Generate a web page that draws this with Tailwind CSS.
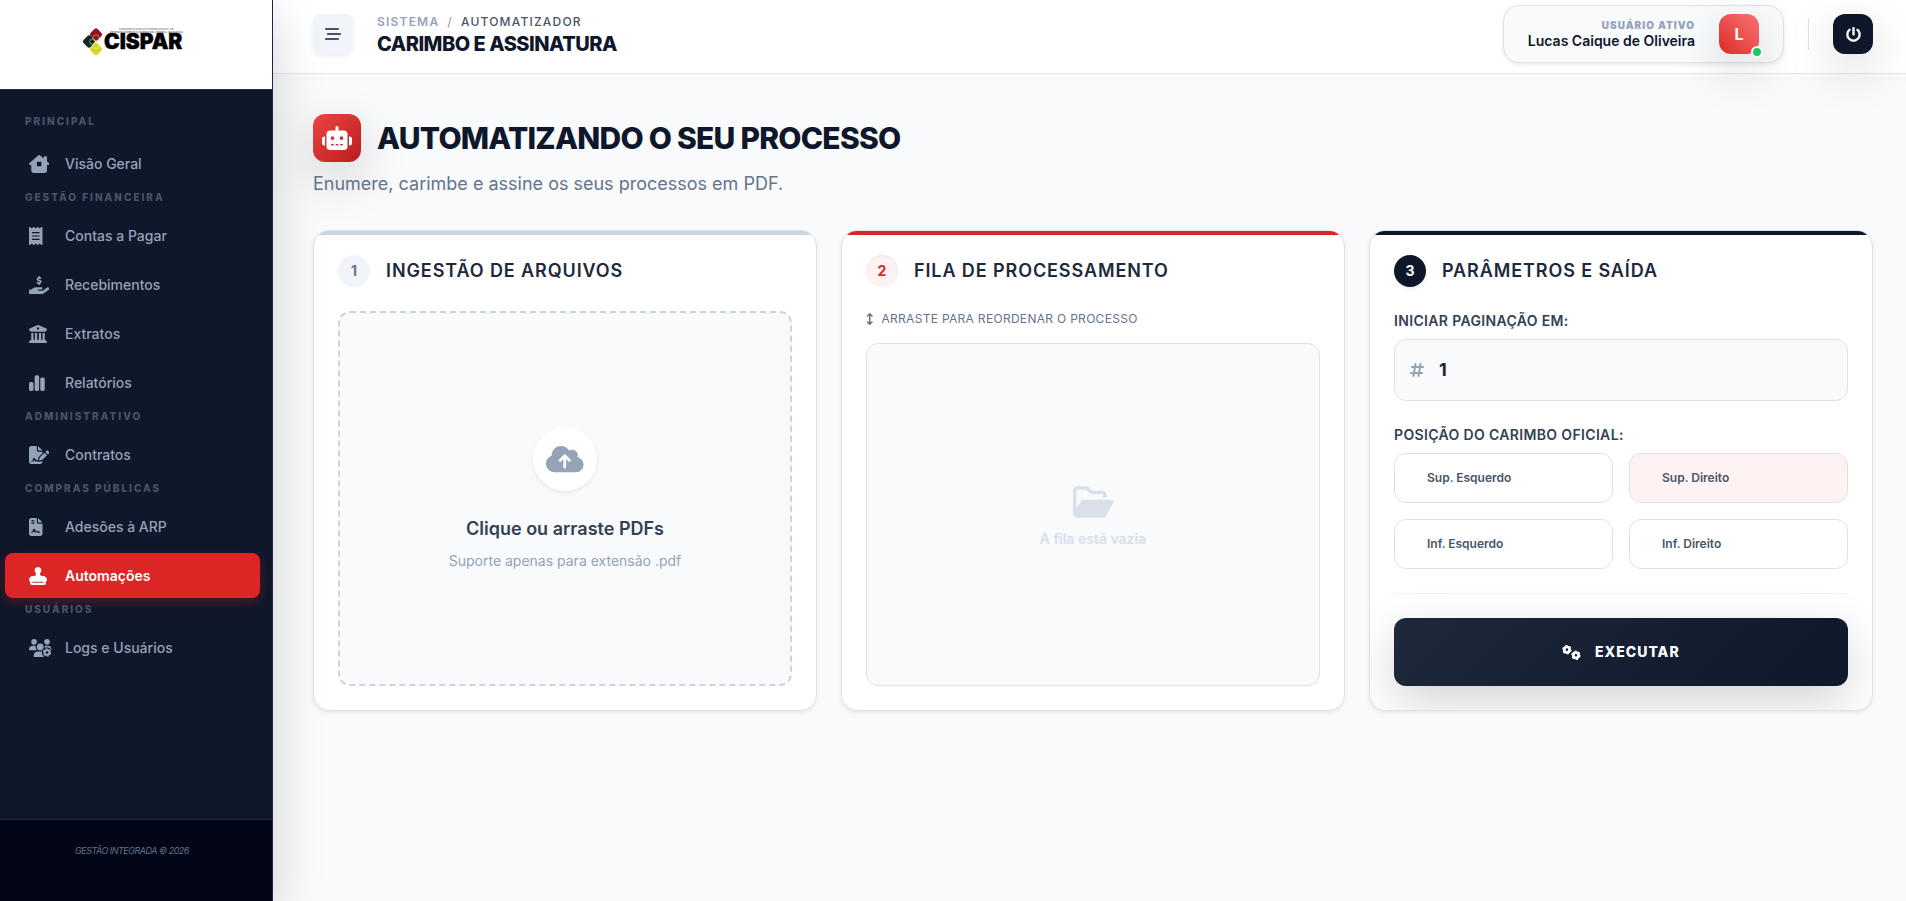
<!DOCTYPE html>
<html lang="pt-BR">
<head>
    <meta charset="UTF-8">
    <meta name="viewport" content="width=device-width, initial-scale=1.0">
    <title>Carimbo e Assinatura</title>
    <script src="https://cdn.jsdelivr.net/npm/@tailwindcss/browser@4"></script>
</head>
<body class="font-[Inter,sans-serif] bg-[#f8fafc] text-[#0f172a]">
    <div class="flex min-h-screen">

        <!-- Sidebar -->
        <aside class="relative z-20 flex w-[273px] shrink-0 flex-col border-r border-[#1e293b] bg-[#0f172a] shadow-[0_16px_48px_rgba(0,0,0,0.175)]">
            <div class="flex h-[90px] items-center justify-center border-b border-[#1e293b] bg-white pr-2">
                <svg class="h-9 w-[104px]" viewBox="0 0 104 36" role="img" aria-label="CISPAR">
                    <rect x="11" y="2.500" width="10" height="10" rx="2.500" transform="rotate(45 16 7.500)" fill="#8f1419"/>
                    <rect x="4" y="9.500" width="10" height="10" rx="2.500" transform="rotate(45 9 14.500)" fill="#0d2a1b"/>
                    <rect x="11" y="17" width="10" height="10" rx="2.500" transform="rotate(45 16 22)" fill="#d8d32a"/>
                    <circle cx="16" cy="11" r="3.200" fill="none" stroke="#d9a9a9" stroke-width=".6"/>
                    <circle cx="12.500" cy="14.700" r="2.800" fill="none" stroke="#cfd8d2" stroke-width=".6"/>
                    <circle cx="16" cy="18.500" r="3.200" fill="none" stroke="#f4f2b8" stroke-width=".6"/>
                    <text x="39" y="2.500" font-size="2.600" fill="#555">CONSÓRCIO PÚBLICO INTERMUNICIPAL DE</text>
                    <text x="30" y="5.500" font-size="2.600" fill="#333">DESENVOLVIMENTO SUSTENTÁVEL CENTRAL DO PARANÁ</text>
                    <text x="24" y="22" font-size="21" font-weight="900" fill="#000" stroke="#000" stroke-width=".4">CISPAR</text>
                </svg>
            </div>

            <nav class="flex flex-1 flex-col pt-[23px] pr-3 pl-[5px] text-sm font-medium text-[#94a3b8]">
                <h2 class="mb-1 pb-[6px] pl-5 text-[10px] leading-4 font-extrabold tracking-[2px] text-[#475569]">PRINCIPAL</h2>
                <a href="#" class="my-[2px] flex h-[45px] items-center rounded-lg pl-6">
                    <span class="w-9"><svg class="h-[18px]" viewBox="0 0 576 512" fill="currentColor" fill-rule="evenodd"><path d="M576 255.500c0 18-15 32.100-32 32.100h-32V448c0 35-29 64-64 64H128c-35 0-64-29-64-64V287.600H32c-18 0-32-14-32-32.100 0-9 3-17 10-24L266.400 8c7-7 15-8 22-8s15 2 21 7L416 100.700V64c0-17.700 14.300-32 32-32h32c17.700 0 32 14.300 32 32v121l52 45.500c8 7 12 15 12 25zM248 192c-13.300 0-24 10.700-24 24v80c0 13.300 10.700 24 24 24h80c13.300 0 24-10.700 24-24v-80c0-13.300-10.700-24-24-24z"/></svg></span>
                    Visão Geral
                </a>

                <h2 class="pt-[2px] pb-[6px] pl-5 text-[10px] leading-[15px] font-extrabold tracking-[2px] text-[#475569]">GESTÃO FINANCEIRA</h2>
                <a href="#" class="my-[2px] flex h-[45px] items-center rounded-lg pl-6">
                    <span class="w-9"><svg class="h-[18px]" viewBox="0 0 384 512" fill="currentColor" fill-rule="evenodd"><path d="M14 2.200C22.500-1.700 32.500-.3 39.600 5.800L80 40.400 120.400 5.800c9-7.700 22.300-7.700 31.200 0L192 40.400 232.400 5.800c9-7.700 22.300-7.700 31.200 0L304 40.400 344.400 5.800c7.100-6.100 17.100-7.500 25.600-3.600s14 12.400 14 21.800V488c0 9.400-5.500 17.900-14 21.800s-18.500 2.500-25.600-3.600L304 471.600l-40.400 34.600c-9 7.700-22.300 7.700-31.200 0L192 471.600l-40.400 34.600c-9 7.700-22.300 7.700-31.200 0L80 471.600 39.600 506.200c-7.100 6.100-17.100 7.500-25.600 3.600S0 497.400 0 488V24C0 14.600 5.500 6.100 14 2.200zM96 144c-8.800 0-16 7.200-16 16s7.200 16 16 16H288c8.800 0 16-7.200 16-16s-7.200-16-16-16H96zM80 352c0 8.800 7.200 16 16 16H288c8.800 0 16-7.200 16-16s-7.200-16-16-16H96c-8.800 0-16 7.200-16 16zM96 240c-8.800 0-16 7.200-16 16s7.200 16 16 16H288c8.800 0 16-7.200 16-16s-7.200-16-16-16H96z"/></svg></span>
                    Contas a Pagar
                </a>
                <a href="#" class="my-[2px] flex h-[45px] items-center rounded-lg pl-6">
                    <span class="w-9"><svg class="h-[18px]" viewBox="0 0 576 512" fill="currentColor"><path d="M312 24V34.500c6.400 1.200 12.600 2.700 18.200 4.200c12.800 3.400 20.400 16.600 17 29.400s-16.600 20.400-29.400 17c-10.900-2.900-21.100-4.900-30.200-5c-7.300-.1-14.700 1.700-19.400 4.400c-2.100 1.300-3.100 2.400-3.500 3c-.3 .5-.7 1.200-.7 2.800c0 .3 0 .5 0 .6c.2 .2 .9 1.200 3.300 2.600c5.800 3.500 14.400 6.200 27.400 10.100l.9 .3c11.100 3.300 25.900 7.800 37.900 15.300c13.700 8.600 26.100 22.900 26.400 44.900c.3 22.500-11.400 38.900-26.700 48.500c-6.700 4.100-13.900 7-21.300 8.800V232c0 13.300-10.700 24-24 24s-24-10.700-24-24V220.600c-9.500-2.300-18.200-5.300-25.600-7.800c-2.100-.7-4.100-1.400-6-2c-12.600-4.200-19.400-17.800-15.200-30.400s17.800-19.400 30.400-15.200c2.600 .9 5 1.700 7.300 2.500c13.600 4.600 23.400 7.900 33.900 8.300c8 .3 15.100-1.600 19.200-4.100c1.900-1.200 2.800-2.200 3.200-2.900c.4-.6 .9-1.800 .8-4.100l0-.2c0-1 0-2.100-4-4.600c-5.700-3.600-14.300-6.400-27.100-10.300l-1.900-.6c-10.800-3.200-25-7.500-36.400-14.400c-13.500-8.100-26.500-22-26.600-44.100c-.1-22.900 12.900-38.600 27.700-47.400c6.400-3.800 13.300-6.400 20.200-8.200V24c0-13.300 10.700-24 24-24s24 10.700 24 24zM568.200 336.300c13.100 17.800 9.300 42.800-8.500 55.900L433.100 485.500c-23.400 17.200-51.600 26.500-80.700 26.500H192 32c-17.700 0-32-14.300-32-32V416c0-17.700 14.300-32 32-32H68.800l44.900-36c22.700-18.200 50.900-28 80-28H272h16 64c17.700 0 32 14.300 32 32s-14.300 32-32 32H288 272c-8.800 0-16 7.200-16 16s7.200 16 16 16H392.600l119.700-88.200c17.800-13.100 42.800-9.300 55.900 8.500z"/></svg></span>
                    Recebimentos
                </a>
                <a href="#" class="my-[2px] flex h-[45px] items-center rounded-lg pl-6">
                    <span class="w-9"><svg class="h-[18px]" viewBox="0 0 512 512" fill="currentColor" fill-rule="evenodd"><path d="M243.400 2.600l-224 96c-14 6-21.800 21-18.700 35.800S16.800 160 32 160v8c0 13.300 10.700 24 24 24H456c13.300 0 24-10.700 24-24v-8c15.200 0 28.300-10.700 31.300-25.600s-4.800-29.900-18.700-35.800l-224-96c-8-3.400-17.200-3.400-25.200 0zM128 224H64V420.300c-.6 .3-1.200 .7-1.800 1.100l-48 32c-11.700 7.800-17 22.400-12.900 35.900S17.900 512 32 512H480c14.100 0 26.500-9.200 30.600-22.700s-1.100-28.100-12.900-35.900l-48-32c-.6-.4-1.200-.7-1.800-1.100V224H384V416H344V224H280V416H232V224H168V416H128V224zM256 64a32 32 0 1 1 0 64 32 32 0 1 1 0-64z"/></svg></span>
                    Extratos
                </a>
                <a href="#" class="my-[2px] flex h-[45px] items-center rounded-lg pl-6">
                    <span class="w-9"><svg class="h-[18px]" viewBox="0 0 448 512" fill="currentColor"><path d="M160 80c0-26.500 21.500-48 48-48h32c26.500 0 48 21.500 48 48V432c0 26.500-21.500 48-48 48H208c-26.500 0-48-21.500-48-48V80zM0 272c0-26.500 21.500-48 48-48H80c26.500 0 48 21.500 48 48V432c0 26.500-21.500 48-48 48H48c-26.500 0-48-21.500-48-48V272zM368 96h32c26.500 0 48 21.500 48 48V432c0 26.500-21.500 48-48 48H368c-26.500 0-48-21.500-48-48V144c0-26.500 21.500-48 48-48z"/></svg></span>
                    Relatórios
                </a>

                <h2 class="pt-[2px] pb-[6px] pl-5 text-[10px] leading-[15px] font-extrabold tracking-[2px] text-[#475569]">ADMINISTRATIVO</h2>
                <a href="#" class="my-[2px] flex h-[45px] items-center rounded-lg pl-6">
                    <span class="w-9"><svg class="h-[18px]" viewBox="0 0 576 512" fill="currentColor"><path d="M64 0C28.700 0 0 28.700 0 64V448c0 35.300 28.700 64 64 64H320c35.300 0 64-28.700 64-64V428.700c-2.700 1.100-5.400 2-8.200 2.700l-60.100 15c-3 .7-6 1.200-9 1.400c-.9 .1-1.800 .2-2.700 .2H240c-6.100 0-11.600-3.400-14.300-8.800l-8.800-17.700c-1.700-3.400-5.100-5.500-8.800-5.500s-7.200 2.100-8.800 5.500l-8.800 17.700c-2.900 5.900-9.200 9.400-15.700 8.800s-12.100-5.100-13.900-11.300L144 381l-9.800 32.800c-6.100 20.300-24.800 34.200-46 34.200H80c-8.800 0-16-7.200-16-16s7.200-16 16-16h8.200c7.100 0 13.300-4.600 15.300-11.400l14.900-49.500c3.400-11.300 13.800-19.100 25.600-19.100s22.200 7.700 25.600 19.100l11.600 38.600c7.400-6.200 16.800-9.700 26.800-9.700c15.900 0 30.400 9 37.500 23.200l4.400 8.800h8.900c-3.100-8.800-3.700-18.400-1.400-27.800l15-60.100c2.800-11.300 8.600-21.500 16.800-29.700L384 203.600V160H256c-17.700 0-32-14.300-32-32V0H64zM256 0V128H384L256 0zM549.800 139.700c-15.600-15.600-40.900-15.600-56.600 0l-29.400 29.400 71 71 29.400-29.400c15.600-15.600 15.600-40.900 0-56.600l-14.400-14.400zM311.900 321c-4.100 4.100-7 9.200-8.400 14.900l-15 60.100c-1.400 5.500 .2 11.200 4.200 15.200s9.700 5.600 15.200 4.200l60.100-15c5.600-1.400 10.800-4.300 14.900-8.400L512.100 262.700l-71-71L311.900 321z"/></svg></span>
                    Contratos
                </a>

                <h2 class="pt-[2px] pb-[6px] pl-5 text-[10px] leading-[15px] font-extrabold tracking-[2px] text-[#475569]">COMPRAS PÚBLICAS</h2>
                <a href="#" class="my-[2px] flex h-[45px] items-center rounded-lg pl-6">
                    <span class="w-9"><svg class="h-[18px]" viewBox="0 0 384 512" fill="currentColor" fill-rule="evenodd"><path d="M64 0C28.700 0 0 28.700 0 64V448c0 35.300 28.700 64 64 64H320c35.300 0 64-28.700 64-64V160H256c-17.700 0-32-14.300-32-32V0H64zM256 0V128H384L256 0zM80 64h64c8.800 0 16 7.200 16 16s-7.200 16-16 16H80c-8.800 0-16-7.200-16-16s7.200-16 16-16zm0 64h64c8.800 0 16 7.200 16 16s-7.200 16-16 16H80c-8.800 0-16-7.200-16-16s7.200-16 16-16zm54.200 253.800c-6.100 20.300-24.800 34.200-46 34.200H80c-8.800 0-16-7.200-16-16s7.200-16 16-16h8.200c7.100 0 13.300-4.600 15.300-11.400l14.900-49.500c3.400-11.300 13.800-19.100 25.600-19.100s22.200 7.700 25.600 19.100l11.600 38.600c7.400-6.200 16.800-9.700 26.800-9.700c15.900 0 30.400 9 37.500 23.200l4.400 8.800H304c8.800 0 16 7.200 16 16s-7.200 16-16 16H240c-6.100 0-11.600-3.400-14.300-8.800l-8.800-17.700c-1.700-3.400-5.100-5.500-8.800-5.500s-7.200 2.100-8.800 5.500l-8.800 17.700c-2.900 5.900-9.200 9.400-15.700 8.800s-12.100-5.100-13.900-11.300L144 349l-9.800 32.800z"/></svg></span>
                    Adesões à ARP
                </a>
                <a href="#" aria-current="page" class="my-[2px] flex h-[45px] items-center rounded-lg bg-[#dc2626] pl-6 font-semibold text-white shadow-[0_4px_12px_rgba(220,38,38,0.3)]">
                    <span class="w-9"><svg class="h-[18px]" viewBox="0 0 512 512" fill="currentColor" fill-rule="evenodd"><path d="M312 201.800c0-17.400 9.200-33.200 19.900-47C344.500 138.500 352 118.100 352 96c0-53-43-96-96-96s-96 43-96 96c0 22.100 7.500 42.500 20.100 58.800c10.700 13.800 19.900 29.600 19.900 47c0 29.900-24.300 54.200-54.200 54.200H112C50.100 256 0 306.100 0 368c0 20.900 13.400 38.700 32 45.300V464c0 26.500 21.500 48 48 48H432c26.500 0 48-21.500 48-48V413.300c18.600-6.600 32-24.400 32-45.300c0-61.900-50.100-112-112-112H366.200c-29.900 0-54.200-24.300-54.200-54.200zM416 416v32H96V416H416z"/></svg></span>
                    Automações
                </a>

                <h2 class="pt-[2px] pb-[6px] pl-5 text-[10px] leading-[15px] font-extrabold tracking-[2px] text-[#475569]">USUÁRIOS</h2>
                <a href="#" class="my-[2px] flex h-[45px] items-center rounded-lg pl-6">
                    <span class="w-9"><svg class="h-[18px]" viewBox="0 0 640 512" fill="currentColor"><path d="M144 160A80 80 0 1 0 144 0a80 80 0 1 0 0 160zm368 0A80 80 0 1 0 512 0a80 80 0 1 0 0 160zM0 298.700C0 310.400 9.600 320 21.300 320H234.700c-26.600-23.500-43.300-57.800-43.300-96c0-7.600 .7-15 1.900-22.300c-13.600-6.300-28.700-9.700-44.600-9.700H106.700C47.800 192 0 239.800 0 298.700zM405.300 320H618.700c11.700 0 21.300-9.600 21.300-21.300C640 239.800 592.200 192 533.300 192H490.700c-15.900 0-31 3.500-44.600 9.700c1.300 7.200 1.900 14.700 1.900 22.300c0 38.200-16.800 72.500-42.700 96zM320 320a96 96 0 1 0 0-192 96 96 0 1 0 0 192zM261.300 352C187.700 352 128 411.700 128 485.300c0 14.700 11.900 26.700 26.700 26.700H485.300c14.700 0 26.700-11.900 26.700-26.700C512 411.700 452.300 352 378.700 352z"/><circle cx="512" cy="384" r="146" fill="#0f172a"/><circle cx="512" cy="384" r="68" fill="none" stroke="currentColor" stroke-width="60"/><circle cx="512" cy="384" r="104" fill="none" stroke="currentColor" stroke-width="36" stroke-dasharray="54.450"/></svg></span>
                    Logs e Usuários
                </a>
            </nav>

            <footer class="flex h-[82px] flex-col items-center border-t border-[#1e293b] bg-[#020617] pt-6 pr-2 text-[9px] leading-[14px] tracking-[-0.5px] text-[#64748b] italic">GESTÃO INTEGRADA © 2026</footer>
        </aside>

        <div class="flex min-w-0 flex-1 flex-col">
            <!-- Top bar -->
            <header class="flex h-[74px] items-center justify-between border-b border-[#e2e8f0] bg-white pr-[33px] pb-[5px] pl-10">
                <div class="flex items-center gap-6">
                    <button type="button" aria-label="Menu" class="flex size-10 items-center justify-center rounded-lg bg-[#f1f5f9] text-[#475569] shadow-[0_2px_4px_rgba(0,0,0,0.075)]">
                        <svg class="h-4" viewBox="0 0 512 512" fill="currentColor"><path d="M0 96C0 78.300 14.300 64 32 64H416c17.700 0 32 14.300 32 32s-14.300 32-32 32H32C14.300 128 0 113.700 0 96zM64 256c0-17.700 14.300-32 32-32H480c17.700 0 32 14.300 32 32s-14.300 32-32 32H96c-17.700 0-32-14.300-32-32zM448 416c0 17.700-14.300 32-32 32H32c-17.700 0-32-14.300-32-32s14.300-32 32-32H416c17.700 0 32 14.300 32 32z"/></svg>
                    </button>
                    <div>
                        <div class="flex gap-2 text-xs leading-5 font-medium tracking-widest text-[#475569]">
                            <span class="font-semibold text-[#94a3b8]">SISTEMA</span>
                            <span class="text-[#94a3b8]">/</span>
                            <span>AUTOMATIZADOR</span>
                        </div>
                        <h1 class="text-xl leading-6 font-extrabold tracking-tight">CARIMBO E ASSINATURA</h1>
                    </div>
                </div>

                <div class="flex items-center gap-6">
                    <div class="flex h-[58px] items-center gap-6 rounded-2xl border border-[#dee2e6] bg-[#f8fafc] px-6 shadow-[0_2px_4px_rgba(0,0,0,0.075)]">
                        <div class="text-right">
                            <p class="text-[10px] leading-[14px] font-black tracking-[1px] text-[#94a3b8]">USUÁRIO ATIVO</p>
                            <p class="text-sm leading-[18px] font-semibold">Lucas Caique de Oliveira</p>
                        </div>
                        <div class="relative flex size-10 items-center justify-center rounded-xl bg-linear-45 from-[#dc2626] to-[#f87171] font-bold text-white shadow-[0_16px_48px_rgba(0,0,0,0.175)]">
                            L
                            <span class="absolute -right-1 -bottom-1 size-3 rounded-full border-2 border-white bg-[#22c55e]"></span>
                        </div>
                    </div>
                    <div class="h-8 w-px bg-[#dee2e6]"></div>
                    <button type="button" aria-label="Sair" class="flex size-10 items-center justify-center rounded-xl bg-[#0f172a] text-white shadow-[0_16px_48px_rgba(0,0,0,0.175)]">
                        <svg class="h-[15px]" viewBox="0 0 512 512" fill="currentColor" stroke="currentColor" stroke-width="16"><path d="M288 32c0-17.700-14.300-32-32-32s-32 14.300-32 32V256c0 17.700 14.300 32 32 32s32-14.300 32-32V32zM143.500 120.600c13.600-11.300 15.400-31.500 4.100-45.100s-31.500-15.400-45.100-4.100C49.700 115.400 16 181.800 16 256c0 132.500 107.500 240 240 240s240-107.500 240-240c0-74.200-33.800-140.600-86.600-184.600c-13.600-11.300-33.800-9.400-45.100 4.100s-9.400 33.800 4.100 45.100c38.900 32.300 63.500 81 63.500 135.400c0 97.200-78.800 176-176 176s-176-78.800-176-176c0-54.400 24.700-103.100 63.500-135.400z"/></svg>
                    </button>
                </div>
            </header>

            <main class="flex-1 pt-10 pr-[33px] pb-10 pl-10">
                <!-- Page title -->
                <div class="mb-2 flex items-center gap-4">
                    <div class="flex size-12 items-center justify-center rounded-xl bg-linear-135 from-[#ef4444] to-[#b91c1c] text-white shadow-[0_16px_48px_rgba(0,0,0,0.175)]">
                        <svg class="h-6" viewBox="0 0 640 512" fill="currentColor" fill-rule="evenodd"><path d="M320 0c17.700 0 32 14.300 32 32V96H472c39.800 0 72 32.200 72 72V440c0 39.800-32.200 72-72 72H168c-39.800 0-72-32.200-72-72V168c0-39.800 32.200-72 72-72H288V32c0-17.700 14.300-32 32-32zM208 384c-8.800 0-16 7.200-16 16s7.200 16 16 16h32c8.800 0 16-7.200 16-16s-7.200-16-16-16H208zm96 0c-8.800 0-16 7.200-16 16s7.200 16 16 16h32c8.800 0 16-7.200 16-16s-7.200-16-16-16H304zm96 0c-8.800 0-16 7.200-16 16s7.200 16 16 16h32c8.800 0 16-7.200 16-16s-7.200-16-16-16H400zM264 256a40 40 0 1 0-80 0 40 40 0 1 0 80 0zm152 40a40 40 0 1 0 0-80 40 40 0 1 0 0 80zM48 224H64V416H48c-26.500 0-48-21.500-48-48V272c0-26.500 21.500-48 48-48zm544 0c26.500 0 48 21.500 48 48v96c0 26.500-21.500 48-48 48H576V224h16z"/></svg>
                    </div>
                    <h2 class="text-3xl font-extrabold tracking-tight">AUTOMATIZANDO O SEU PROCESSO</h2>
                </div>
                <p class="mb-8 text-lg text-[#64748b]">Enumere, carimbe e assine os seus processos em PDF.</p>

                <div class="grid grid-cols-3 gap-6">
                    <!-- 1. Upload -->
                    <section class="relative flex flex-col overflow-hidden rounded-2xl border border-[#dee2e6] bg-white p-6 shadow-[0_2px_4px_rgba(0,0,0,0.075)]">
                        <div class="absolute inset-x-0 top-0 h-1 bg-[#cbd5e1]"></div>
                        <div class="mb-6 flex items-center gap-4">
                            <span class="flex size-8 items-center justify-center rounded-full bg-[#f1f5f9] text-sm font-bold text-[#64748b]">1</span>
                            <h3 class="text-lg leading-8 font-semibold tracking-wider text-[#1e293b]">INGESTÃO DE ARQUIVOS</h3>
                        </div>
                        <label for="pdf-files" class="flex flex-1 cursor-pointer flex-col items-center justify-center rounded-xl border-2 border-dashed border-[#cbd5e1] bg-[#f8fafc]">
                            <input type="file" id="pdf-files" accept=".pdf" multiple class="sr-only">
                            <span class="mb-6 flex size-16 items-center justify-center rounded-full bg-white text-[#94a3b8] shadow-[0_2px_4px_rgba(0,0,0,0.075)]">
                                <svg class="h-[30px]" viewBox="0 0 640 512" fill="currentColor" fill-rule="evenodd"><path d="M144 480C64.500 480 0 415.500 0 336c0-62.800 40.200-116.200 96.200-135.900c-.1-2.700-.2-5.400-.2-8.100c0-88.400 71.600-160 160-160c59.300 0 111 32.200 138.700 80.200C409.900 102 428.300 96 448 96c53 0 96 43 96 96c0 12.200-2.300 23.800-6.400 34.600C596 238.400 640 290.100 640 352c0 70.700-57.300 128-128 128H144zm79-217c-9.400 9.400-9.400 24.600 0 33.900s24.600 9.400 33.900 0l39-39V392c0 13.300 10.700 24 24 24s24-10.700 24-24V257.900l39 39c9.400 9.400 24.600 9.400 33.900 0s9.400-24.600 0-33.900l-80-80c-9.400-9.400-24.600-9.400-33.900 0l-80 80z"/></svg>
                            </span>
                            <span class="mb-2 text-lg font-semibold text-[#334155]">Clique ou arraste PDFs</span>
                            <span class="text-sm text-[#94a3b8]">Suporte apenas para extensão .pdf</span>
                        </label>
                    </section>

                    <!-- 2. Queue -->
                    <section class="relative flex flex-col overflow-hidden rounded-2xl border border-[#dee2e6] bg-white p-6 shadow-[0_2px_4px_rgba(0,0,0,0.075)]">
                        <div class="absolute inset-x-0 top-0 h-1 bg-[#dc2626]"></div>
                        <div class="mb-6 flex items-center gap-4">
                            <span class="flex size-8 items-center justify-center rounded-full bg-[#fef2f2] text-sm font-bold text-[#dc2626] shadow-[inset_0_1px_2px_rgba(0,0,0,0.075)]">2</span>
                            <h3 class="text-lg leading-8 font-semibold tracking-wider text-[#1e293b]">FILA DE PROCESSAMENTO</h3>
                        </div>
                        <p class="mb-4 flex items-center gap-2 text-xs tracking-wide text-[#64748b]">
                            <svg class="h-3" viewBox="0 0 320 512" fill="currentColor"><path d="M182.600 9.400c-12.500-12.500-32.800-12.500-45.300 0l-96 96c-12.500 12.500-12.500 32.800 0 45.300s32.800 12.500 45.300 0L128 109.300V402.700L86.600 361.400c-12.500-12.500-32.800-12.500-45.300 0s-12.500 32.800 0 45.300l96 96c12.500 12.500 32.800 12.500 45.300 0l96-96c12.500-12.500 12.500-32.800 0-45.300s-32.800-12.500-45.300 0L192 402.700V109.300l41.400 41.400c12.500 12.500 32.800 12.500 45.300 0s12.500-32.800 0-45.300l-96-96z"/></svg>
                            ARRASTE PARA REORDENAR O PROCESSO
                        </p>
                        <div class="flex flex-1 flex-col items-center justify-center gap-3 rounded-xl border border-[#dee2e6] bg-[#f8fafc] text-[#d9e0ea]">
                            <svg class="h-9" viewBox="0 0 576 512" fill="currentColor"><path d="M384 480h48c11.400 0 21.900-6 27.600-15.900l112-192c5.800-9.900 5.800-22.100 .1-32.100S555.500 224 544 224H144c-11.400 0-21.900 6-27.600 15.900L48 357.100V96c0-8.800 7.200-16 16-16H181.500c4.200 0 8.300 1.700 11.300 4.700l26.500 26.500c21 21 49.500 32.800 79.200 32.800H416c8.800 0 16 7.200 16 16v32h48V160c0-35.300-28.700-64-64-64H298.500c-17 0-33.300-6.700-45.300-18.700L226.700 50.700c-12-12-28.300-18.700-45.300-18.700H64C28.700 32 0 60.700 0 96V416c0 35.300 28.700 64 64 64H87.700 384z"/></svg>
                            <p class="text-sm leading-none font-semibold">A fila está vazia</p>
                        </div>
                    </section>

                    <!-- 3. Output settings -->
                    <section class="relative flex flex-col overflow-hidden rounded-2xl border border-[#dee2e6] bg-white p-6 shadow-[0_2px_4px_rgba(0,0,0,0.075)]">
                        <div class="absolute inset-x-0 top-0 h-1 bg-[#0f172a]"></div>
                        <div class="mb-6 flex items-center gap-4">
                            <span class="flex size-8 items-center justify-center rounded-full bg-[#0f172a] text-sm font-bold text-white shadow-[0_2px_4px_rgba(0,0,0,0.075)]">3</span>
                            <h3 class="text-lg leading-8 font-semibold tracking-wider text-[#1e293b]">PARÂMETROS E SAÍDA</h3>
                        </div>
                        <form>
                            <label for="start-page" class="mb-2 block text-sm font-semibold tracking-wide text-[#334155]">INICIAR PAGINAÇÃO EM:</label>
                            <div class="mb-6 flex h-[62px] items-center gap-[15px] rounded-xl border border-[#dee2e6] bg-[#f8fafc] px-[15px]">
                                <svg class="h-4 shrink-0 text-[#94a3b8]" viewBox="0 0 448 512" fill="currentColor" fill-rule="evenodd"><path d="M181.300 32.400c17.400 2.900 29.200 19.400 26.300 36.800L197.800 128h95.100l11.500-69.300c2.900-17.400 19.400-29.200 36.800-26.300s29.200 19.400 26.300 36.800L357.800 128H416c17.700 0 32 14.300 32 32s-14.300 32-32 32H347.100L325.800 320H384c17.700 0 32 14.300 32 32s-14.300 32-32 32H315.100l-11.500 69.300c-2.900 17.400-19.400 29.200-36.800 26.300s-29.200-19.400-26.300-36.800l9.800-58.700H155.100l-11.500 69.300c-2.900 17.400-19.400 29.200-36.800 26.300s-29.200-19.400-26.300-36.800L90.200 384H32c-17.700 0-32-14.300-32-32s14.300-32 32-32h68.900l21.300-128H64c-17.700 0-32-14.300-32-32s14.300-32 32-32h68.900l11.500-69.300c2.900-17.400 19.400-29.200 36.800-26.300zM187.100 192L165.800 320h95.100l21.300-128H187.100z"/></svg>
                                <input type="text" inputmode="numeric" id="start-page" value="1" class="min-w-0 flex-1 bg-transparent text-lg font-bold text-[#1e293b] outline-none">
                            </div>

                            <fieldset>
                                <legend class="mb-2 text-sm font-semibold tracking-wide text-[#334155]">POSIÇÃO DO CARIMBO OFICIAL:</legend>
                                <div class="grid grid-cols-2 gap-4 text-xs font-semibold text-[#475569]">
                                    <label class="flex h-[50px] cursor-pointer items-center rounded-xl border border-[#dee2e6] bg-white pl-8 has-checked:bg-[#fef2f2]"><input type="radio" name="position" value="top-left" class="sr-only">Sup. Esquerdo</label>
                                    <label class="flex h-[50px] cursor-pointer items-center rounded-xl border border-[#dee2e6] bg-white pl-8 has-checked:bg-[#fef2f2]"><input type="radio" name="position" value="top-right" class="sr-only" checked>Sup. Direito</label>
                                    <label class="flex h-[50px] cursor-pointer items-center rounded-xl border border-[#dee2e6] bg-white pl-8 has-checked:bg-[#fef2f2]"><input type="radio" name="position" value="bottom-left" class="sr-only">Inf. Esquerdo</label>
                                    <label class="flex h-[50px] cursor-pointer items-center rounded-xl border border-[#dee2e6] bg-white pl-8 has-checked:bg-[#fef2f2]"><input type="radio" name="position" value="bottom-right" class="sr-only">Inf. Direito</label>
                                </div>
                            </fieldset>

                            <hr class="my-6 border-[#f1f3f5]">

                            <button type="button" class="flex h-[68px] w-full items-center justify-center gap-[14px] rounded-xl bg-linear-135 from-[#1e293b] to-[#0f172a] text-sm font-extrabold tracking-[1px] text-white shadow-[0_16px_48px_rgba(0,0,0,0.175)]">
                                <svg class="h-[15px]" viewBox="0 0 640 512" fill="none" stroke="currentColor"><circle cx="168" cy="160" r="90" stroke-width="90"/><circle cx="168" cy="160" r="134" stroke-width="52" stroke-dasharray="70.160"/><circle cx="476" cy="350" r="90" stroke-width="90"/><circle cx="476" cy="350" r="134" stroke-width="52" stroke-dasharray="70.160"/></svg>
                                EXECUTAR
                            </button>
                        </form>
                    </section>
                </div>
            </main>
        </div>
    </div>
</body>
</html>
